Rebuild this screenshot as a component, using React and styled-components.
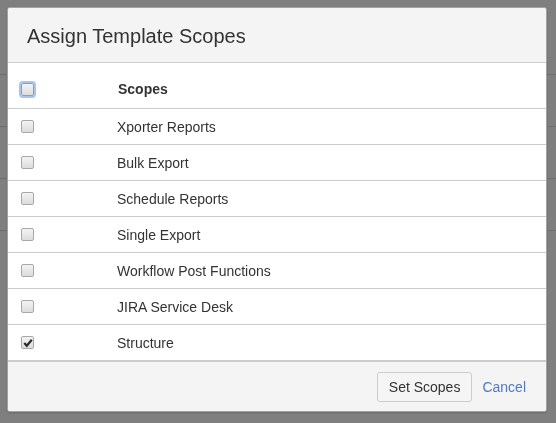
import React from "react";
import styled, { createGlobalStyle } from "styled-components";

const GlobalStyle = createGlobalStyle`
	html, body {
		margin: 0;
		padding: 0;
		background: #fff;
		font-family: "Liberation Sans", Arial, Helvetica, sans-serif;
		font-size: 14px;
		color: #333;
	}
`;

const scopes = [
	{ name: "Xporter Reports", checked: false },
	{ name: "Bulk Export", checked: false },
	{ name: "Schedule Reports", checked: false },
	{ name: "Single Export", checked: false },
	{ name: "Workflow Post Functions", checked: false },
	{ name: "JIRA Service Desk", checked: false },
	{ name: "Structure", checked: true },
];

const CheckIcon = () => (
	<svg width="10" height="10" viewBox="0 0 10 10">
		<path d="M1.3 5 L3.8 7.8 L8.8 1.8" fill="none" stroke="#2b2b2b" strokeWidth="2.2" />
	</svg>
);

const Checkbox = ({ checked, focused }) => (
	<Box $focused={focused}>{checked && <CheckIcon />}</Box>
);

const App = () => {
	return (
		<>
			<GlobalStyle />
			<Page>
				{[0, 1, 2, 3].map((i) => (
					<PageRow key={i} />
				))}
			</Page>
			<Backdrop>
				<Dialog>
					<Header>
						<Title>Assign Template Scopes</Title>
					</Header>
					<HeadRow>
						<CheckCell>
							<Checkbox focused />
						</CheckCell>
						<HeadLabel>Scopes</HeadLabel>
					</HeadRow>
					{scopes.map((s) => (
						<Row key={s.name}>
							<CheckCell>
								<Checkbox checked={s.checked} />
							</CheckCell>
							<Label>{s.name}</Label>
						</Row>
					))}
					<Footer>
						<Button type="button">Set Scopes</Button>
						<CancelLink href="#">Cancel</CancelLink>
					</Footer>
				</Dialog>
			</Backdrop>
		</>
	);
};

const Page = styled.div`
	padding-top: 23px;
`;

const PageRow = styled.div`
	height: 52px;
	box-sizing: border-box;
	border-bottom: 1px solid #dedede;
`;

const Backdrop = styled.div`
	position: fixed;
	inset: 0;
	background: rgba(0, 0, 0, 0.5);
	display: flex;
	align-items: flex-start;
	padding: 7px;
`;

const Dialog = styled.div`
	width: 540px;
	box-sizing: border-box;
	background: #fff;
	border: 1px solid #a3a3a3;
	border-radius: 3px;
	overflow: hidden;
	box-shadow: 0 1px 2px rgba(0, 0, 0, 0.2);
	display: flex;
	flex-direction: column;
`;

const Header = styled.div`
	height: 55px;
	box-sizing: border-box;
	background: #f4f4f4;
	border-bottom: 1px solid #ccc;
	display: flex;
	align-items: center;
	padding: 2px 19px 0;
`;

const Title = styled.h4`
	margin: 0;
	font-size: 20px;
	font-weight: normal;
	color: #333;
`;

const Row = styled.div`
	display: grid;
	grid-template-columns: 109px 1fr;
	align-items: center;
	height: 36px;
	box-sizing: border-box;
	border-bottom: 1px solid #ccc;
`;

const HeadRow = styled(Row)`
	height: 46px;
	padding-top: 7px;
`;

const CheckCell = styled.div`
	padding-left: 13px;
	display: flex;
	align-items: center;
`;

const Box = styled.span`
	width: 13px;
	height: 13px;
	box-sizing: border-box;
	border-radius: 2px;
	border: 1px solid ${(p) => (p.$focused ? "#7a9fe0" : "#a8a8a8")};
	background: linear-gradient(#f3f3f3, #dcdcdc);
	box-shadow: ${(p) => (p.$focused ? "0 0 0 2px #a9c4f2" : "none")};
	display: flex;
	align-items: center;
	justify-content: center;
`;

const Label = styled.span`
	font-size: 14px;
	color: #333;
`;

const HeadLabel = styled(Label)`
	font-weight: bold;
	padding-left: 1px;
`;

const Footer = styled.div`
	background: #f4f4f4;
	border-top: 1px solid #ccc;
	height: 50px;
	box-sizing: border-box;
	padding: 10px 20px 0;
	display: flex;
	justify-content: flex-end;
	align-items: flex-start;
	gap: 10px;
`;

const Button = styled.button`
	height: 30px;
	padding: 0 11px;
	font-family: inherit;
	font-size: 14px;
	color: #333;
	background: #f5f5f5;
	border: 1px solid #ccc;
	border-radius: 3px;
`;

const CancelLink = styled.a`
	line-height: 30px;
	font-size: 14px;
	color: #5278bd;
	text-decoration: none;
`;

export default App;
